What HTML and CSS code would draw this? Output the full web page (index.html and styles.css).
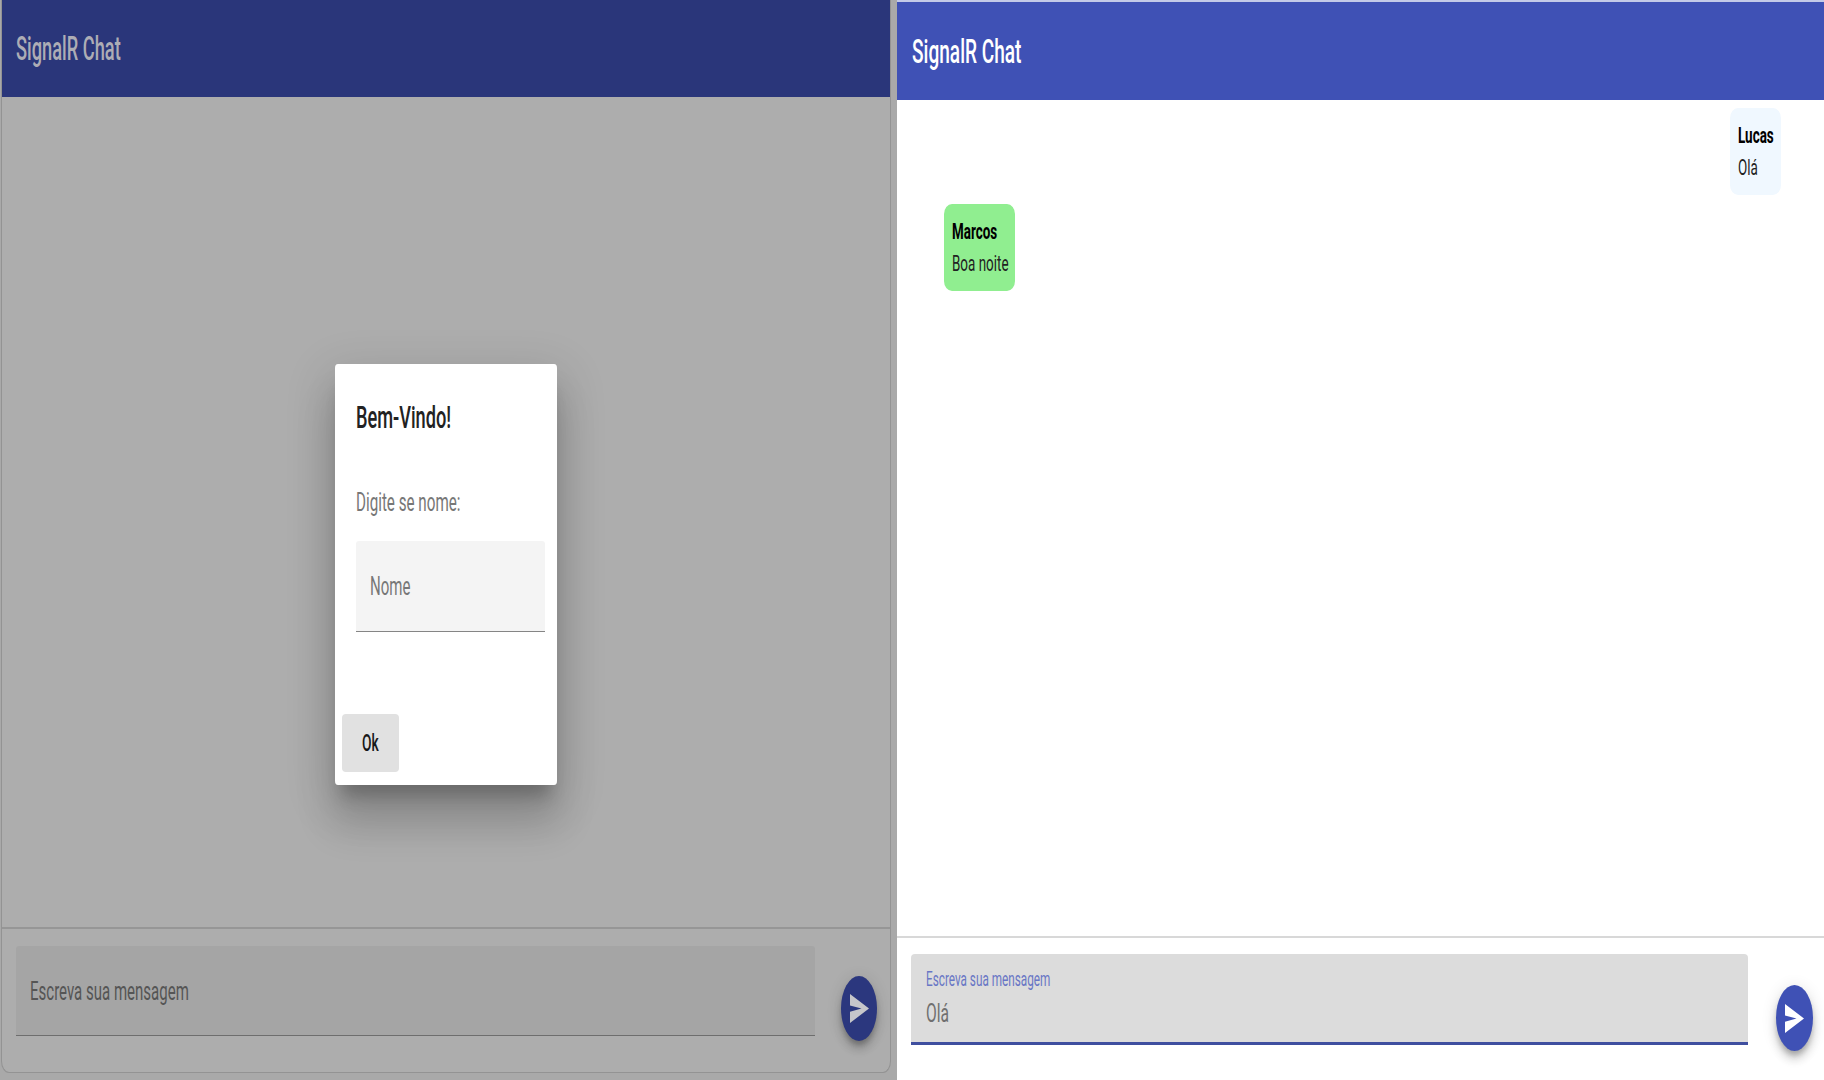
FILE: index.html
```html
<!DOCTYPE html>
<html lang="pt-BR">
<head>
<meta charset="utf-8">
<title>SignalR Chat</title>
<link rel="stylesheet" href="styles.css">
</head>
<body>
<main class="screens">
  <section class="pane pane-dim">
    <div class="card">
      <header class="toolbar"><span class="t title">SignalR Chat</span></header>
      <div class="messages"></div>
      <footer class="composer">
        <div class="field"><span class="t placeholder">Escreva sua mensagem</span></div>
        <button class="fab" aria-label="Enviar"><svg viewBox="0 0 19 29" preserveAspectRatio="none"><path d="M0 0 19 14.5 0 29V17.8L11.5 14.5 0 11.5Z"/></svg></button>
      </footer>
    </div>
    <div class="dialog">
      <h2 class="t dialog-title">Bem-Vindo!</h2>
      <p class="t dialog-text">Digite se nome:</p>
      <div class="name-field"><span class="t placeholder">Nome</span></div>
      <button class="ok"><span class="t ok-text">Ok</span></button>
    </div>
  </section>
  <section class="pane pane-live">
    <header class="toolbar"><span class="t title">SignalR Chat</span></header>
    <div class="messages">
      <article class="bubble mine"><strong class="t">Lucas</strong><span class="t">Olá</span></article>
      <article class="bubble theirs"><strong class="t">Marcos</strong><span class="t">Boa noite</span></article>
    </div>
    <footer class="composer">
      <div class="field focused"><span class="t label">Escreva sua mensagem</span><span class="t value">Olá</span></div>
      <button class="fab" aria-label="Enviar"><svg viewBox="0 0 19 29" preserveAspectRatio="none"><path d="M0 0 19 14.5 0 29V17.8L11.5 14.5 0 11.5Z"/></svg></button>
    </footer>
  </section>
</main>
</body>
</html>
```

FILE: styles.css
```css
* { box-sizing: border-box; }
body { margin: 0; font-family: Roboto, "Liberation Sans", sans-serif; overflow: hidden; }
button { border: 0; padding: 0; font: inherit; }
h2, p { margin: 0; }
.screens { display: flex; width: 1824px; height: 1080px; }
.pane { height: 1080px; flex: none; }

/* condensed text: tall glyphs, narrow advance */
.t { display: block; width: max-content; white-space: nowrap; transform: scaleX(var(--sx, .582)); transform-origin: 0 50%; }

.toolbar { display: flex; align-items: center; height: 98px; flex: none; }
.title { font-size: 32.5px; font-weight: 500; line-height: 38px; }
.messages { flex: 1; }
.composer { display: flex; flex: none; }
.fab { display: flex; align-items: center; justify-content: center; width: 37px; height: 66px; border-radius: 50%; background: #3f51b5; box-shadow: 0 5px 5px -1px rgba(0,0,0,.2), 0 9px 10px rgba(0,0,0,.14), 0 2px 16px rgba(0,0,0,.12); }
.fab svg { width: 19px; height: 29px; fill: #fff; }
.placeholder { font-size: 25.8px; line-height: 30px; }

.pane-dim { position: relative; width: 897px; background: #a9a9a9; padding: 0 6px 7px 1px; }
.card { display: flex; flex-direction: column; height: 1073px; background: #adadad; border: 1px solid #939393; border-top: 0; border-radius: 0 0 8px 8px / 0 0 12px 12px; }
.pane-dim .toolbar { height: 97px; padding-left: 14px; background: #2a367a; color: #adadb5; }
.pane-dim .title { --sx: .562; }
.pane-dim .composer { height: 145px; border-top: 2px solid #969696; padding: 17px 0 0 14px; }
.pane-dim .field { width: 799px; height: 90px; padding: 30px 14px 0; background: #a5a5a5; border-bottom: 1px solid #6e6e6e; border-radius: 3px 3px 0 0; color: #555; }
.pane-dim .fab { margin: 30px 0 0 26px; background: #2b377e; height: 65px; width: 36px; }
.pane-dim .fab svg { fill: #c6c6ca; }

.dialog { position: absolute; left: 335px; top: 363.5px; width: 222px; height: 421.5px; padding: 34.5px 12px 13px 21px; background: #fff; border-radius: 3px / 4px; display: flex; flex-direction: column; box-shadow: 0 18px 15px -7px rgba(0,0,0,.2), 0 39px 38px 3px rgba(0,0,0,.14), 0 14px 46px 8px rgba(0,0,0,.12); }
.dialog-title { --sx: .568; font-size: 32px; font-weight: 500; line-height: 38px; color: #222; }
.dialog-text { --sx: .589; font-size: 25.8px; line-height: 30px; margin-top: 51px; color: #777; }
.name-field { height: 91px; width: 189px; margin-top: 24px; padding: 30px 14px 0; background: #f4f4f4; border-bottom: 1px solid #858585; border-radius: 3px 3px 0 0; color: #777; }
.ok { width: 57px; height: 58px; margin: auto 0 0 -14px; padding: 2px 0 0 20px; background: #e1e1e1; border-radius: 4px; color: #181818; }
.ok-text { --sx: .6; font-size: 23px; font-weight: 500; line-height: 28px; }

.pane-live { display: flex; flex-direction: column; width: 927px; background: #fff; border-top: 2px solid #c3cae8; }
.pane-live .toolbar { padding: 1px 0 0 15px; background: #3f51b5; color: #fff; }
.pane-live .title { --sx: .587; }
.pane-live .messages { display: flex; flex-direction: column; padding: 8px 43px 0 47px; }
.bubble { --sx: .6; height: 87px; padding: 11px 8px; border-radius: 8px / 10px; font-size: 22.4px; line-height: 32px; color: #222; }
.bubble strong { font-weight: 700; color: #000; }
.mine { align-self: flex-end; width: 51px; background: #f0f8ff; }
.theirs { align-self: flex-start; width: 71px; margin-top: 9px; background: #90ee90; }
.pane-live .composer { height: 144px; border-top: 2px solid #d8d8d8; padding: 16px 0 0 14px; }
.pane-live .field { width: 837px; height: 91px; padding: 14px 15px 0; background: #dcdcdc; border-bottom: 3px solid #3f4f9f; border-radius: 4px 4px 0 0; }
.pane-live .fab { margin: 31px 0 0 28px; }
.label { --sx: .606; font-size: 19.4px; line-height: 24px; color: #6876c5; }
.value { --sx: .605; font-size: 25.8px; line-height: 30px; margin-top: 6px; color: #707070; }
```
